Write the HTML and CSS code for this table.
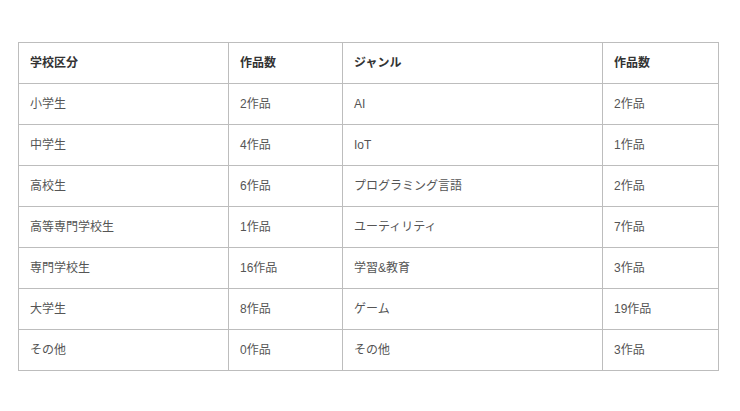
FILE: index.html
```html
<!DOCTYPE html>
<html lang="ja">
<head>
<meta charset="utf-8">
<link rel="stylesheet" href="styles.css">
</head>
<body>
<table class="works">
<colgroup><col class="c1"><col class="c2"><col class="c3"><col class="c4"></colgroup>
<thead>
<tr><th>学校区分</th><th>作品数</th><th>ジャンル</th><th>作品数</th></tr>
</thead>
<tbody>
<tr><td>小学生</td><td>2作品</td><td>AI</td><td>2作品</td></tr>
<tr><td>中学生</td><td>4作品</td><td>IoT</td><td>1作品</td></tr>
<tr><td>高校生</td><td>6作品</td><td>プログラミング言語</td><td>2作品</td></tr>
<tr><td>高等専門学校生</td><td>1作品</td><td>ユーティリティ</td><td>7作品</td></tr>
<tr><td>専門学校生</td><td>16作品</td><td>学習&amp;教育</td><td>3作品</td></tr>
<tr><td>大学生</td><td>8作品</td><td>ゲーム</td><td>19作品</td></tr>
<tr><td>その他</td><td>0作品</td><td>その他</td><td>3作品</td></tr>
</tbody>
</table>
</body>
</html>
```
FILE: styles.css
```css
html, body { margin: 0; padding: 0; background: #fff; }
body {
  padding: 42px 0 0 18px;
  font-family: "Liberation Sans", "Noto Sans CJK JP", sans-serif;
  font-size: 12px;
  line-height: 16px;
  color: #555;
}
.works {
  border-collapse: collapse;
  table-layout: fixed;
  width: 700px;
}
.c1 { width: 210px; }
.c2 { width: 114px; }
.c3 { width: 260px; }
.c4 { width: 116px; }
.works th, .works td {
  border: 1px solid #bdbdbd;
  padding: 0 11px 1px;
  text-align: left;
  vertical-align: middle;
  box-sizing: border-box;
  height: 41px;
}
.works th { font-weight: bold; color: #333; }
```
